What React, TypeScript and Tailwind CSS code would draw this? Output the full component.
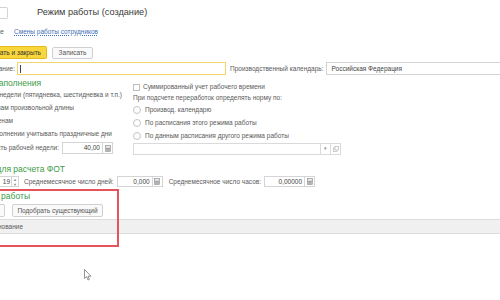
import type { ReactNode } from "react";

function Tail({ className, children }: { className: string; children: ReactNode }) {
  // text whose start is cut off by the left edge of the window
  return (
    <div className={`flex justify-end overflow-hidden whitespace-nowrap shrink-0 ${className}`}>
      <span className="shrink-0">{children}</span>
    </div>
  );
}

function CalcIcon() {
  return (
    <div className="w-[10px] h-full flex items-center justify-center border-l border-[#d6d6d6]">
      <svg width="6" height="7" viewBox="0 0 6 7">
        <rect x="0.5" y="0.5" width="5" height="6" fill="#c9c9c9" stroke="#8d8d8d" strokeWidth="0.6" />
        <rect x="1.3" y="1.2" width="3.4" height="1.3" fill="#f4f4f4" />
        <path d="M1.3 3.6h3.4M1.3 5h3.4" stroke="#7a7a7a" strokeWidth="0.6" />
      </svg>
    </div>
  );
}

function Radio({ label }: { label: string }) {
  return (
    <div className="h-[13px] flex items-center gap-[4px]">
      <span className="w-[8px] h-[8px] rounded-full border border-[#c4c4c4] bg-white" />
      <span>{label}</span>
    </div>
  );
}

export default function App() {
  return (
    <div
      className="relative w-[500px] h-[300px] overflow-hidden bg-white text-[6.5px] text-[#5a5a5a]"
      style={{ fontFamily: '"Liberation Sans", Arial, sans-serif' }}
    >
      {/* title */}
      <div className="h-[13px] mt-[6px] flex items-center">
        <div className="w-[8px] h-[12px] border border-l-0 border-[#d2d2d2] bg-white rounded-r-[2px]" />
        <div className="ml-[29px] text-[9.2px] text-[#3a3a3a] whitespace-nowrap">Режим работы (создание)</div>
      </div>

      {/* navigation */}
      <div className="h-[10px] mt-[8px] flex items-center">
        <Tail className="w-[4px]">Основное</Tail>
        <span className="ml-[10px] text-[#3f6fb3] underline decoration-dotted underline-offset-1">Смены работы сотрудников</span>
      </div>

      {/* command bar */}
      <div className="h-[13px] mt-[9px] flex items-center">
        <div className="h-[13px] w-[47px] flex items-center justify-end pr-[5px] bg-[#f9d63c] border border-l-0 border-[#e2bb18] rounded-r-[2px] text-[#333]">
          <Tail className="w-[42px]">Записать и закрыть</Tail>
        </div>
        <div className="ml-[5px] h-[12px] w-[41px] flex items-center justify-center border border-[#d0d0d0] rounded-[2px] bg-[#fafafa] text-[#555]">
          Записать
        </div>
      </div>

      {/* name / calendar */}
      <div className="h-[13px] mt-[3px] flex items-center">
        <Tail className="w-[15px]">Наименование:</Tail>
        <div className="ml-[2px] w-[209px] h-[13px] border border-[#f2d66b] bg-white flex items-center pl-[2px]">
          <span className="w-px h-[8px] bg-[#444]" />
        </div>
        <span className="ml-[4px] whitespace-nowrap">Производственный календарь:</span>
        <div className="ml-[3px] flex-1 h-[13px] border border-[#d4d4d4] border-r-0 flex items-center pl-[4px] text-[#444] whitespace-nowrap">
          Российская Федерация
        </div>
      </div>

      {/* filling mode */}
      <div className="flex mt-[3px]">
        <div className="w-[133px] shrink-0 flex flex-col">
          <Tail className="w-[41px] h-[10px] items-center text-[8.5px] text-[#3c9b46]">Способ заполнения</Tail>
          <Tail className="w-[122px] h-[13px] items-center">По дням недели (пятидневка, шестидневка и т.п.)</Tail>
          <Tail className="w-[74px] h-[13px] items-center">По циклам произвольной длины</Tail>
          <Tail className="w-[13px] h-[13px] items-center">По сменам</Tail>
          <Tail className="w-[112px] h-[13px] items-center">При заполнении учитывать праздничные дни</Tail>
          <div className="h-[12px] mt-[2px] flex items-center">
            <Tail className="w-[59px]">Длительность рабочей недели:</Tail>
            <div className="ml-[3px] w-[51px] h-[12px] border border-[#d4d4d4] flex items-center">
              <span className="flex-1 text-right pr-[2px] text-[#444]">40,00</span>
              <CalcIcon />
            </div>
          </div>
        </div>

        <div className="flex flex-col mt-[3px]">
          <div className="h-[12px] flex items-center gap-[3px]">
            <span className="w-[7px] h-[7px] border border-[#bdbdbd] bg-white" />
            <span className="whitespace-nowrap">Суммированный учет рабочего времени</span>
          </div>
          <div className="h-[10px] flex items-center whitespace-nowrap">При подсчете переработок определять норму по:</div>
          <Radio label="Производ. календарю" />
          <Radio label="По расписания этого режима работы" />
          <Radio label="По данным рaсписания другого режима работы" />
          <div className="mt-[1px] w-[208px] h-[12px] border border-[#dadada] flex justify-end">
            <div className="w-[10px] border-l border-[#dadada] flex items-center justify-center text-[5px] text-[#888]">▾</div>
            <div className="w-[10px] border-l border-[#dadada] flex items-center justify-center">
              <svg width="6" height="6" viewBox="0 0 6 6">
                <rect x="0.5" y="2" width="3.5" height="3.5" fill="none" stroke="#aaa" strokeWidth="0.6" />
                <rect x="2" y="0.5" width="3.5" height="3.5" fill="white" stroke="#aaa" strokeWidth="0.6" />
              </svg>
            </div>
          </div>
        </div>
      </div>

      {/* payroll */}
      <Tail className="w-[65px] h-[10px] mt-[9px] items-center text-[8.5px] text-[#3c9b46]">Параметры для расчета ФОТ</Tail>
      <div className="h-[11px] mt-[2px] flex items-center">
        <div className="w-[12px] h-[11px] border border-l-0 border-[#d4d4d4] flex items-center justify-end pr-[1px] text-[#444]">19</div>
        <div className="w-[7px] h-[11px] border border-l-0 border-[#d4d4d4] flex flex-col items-center justify-center text-[4px] leading-[5px] text-[#888]">
          <span>▲</span>
          <span>▼</span>
        </div>
        <span className="ml-[5px] whitespace-nowrap">Среднемесячное число дней:</span>
        <div className="ml-[3px] w-[46px] h-[11px] border border-[#d4d4d4] flex items-center">
          <span className="flex-1 text-right pr-[2px] text-[#444]">0,000</span>
          <CalcIcon />
        </div>
        <span className="ml-[6px] whitespace-nowrap">Среднемесячное число часов:</span>
        <div className="ml-[3px] w-[51px] h-[11px] border border-[#d4d4d4] flex items-center">
          <span className="flex-1 text-right pr-[2px] text-[#444]">0,00000</span>
          <CalcIcon />
        </div>
      </div>

      {/* schedules */}
      <Tail className="w-[30px] h-[10px] mt-[4px] items-center text-[8.5px] text-[#3c9b46]">Графики работы</Tail>
      <div className="h-[13px] mt-[3px] flex items-center">
        <div className="w-[5px] h-[13px] border border-l-0 border-[#d0d0d0] rounded-r-[2px] bg-[#fafafa]" />
        <div className="ml-[7px] h-[13px] w-[91px] flex items-center justify-center border border-[#d0d0d0] rounded-[2px] bg-[#fafafa] text-[#555] whitespace-nowrap">
          Подобрать существующий
        </div>
      </div>
      <div className="h-[15px] mt-[2px] flex items-center bg-[#f0f0f0] border-y border-[#dcdcdc]">
        <Tail className="w-[23px]">Наименование</Tail>
      </div>

      {/* highlight frame drawn over the form */}
      <div className="absolute left-[-3px] top-[189px] w-[122px] h-[58px] border-2 border-[#e6535a]" />

      {/* mouse pointer */}
      <svg className="absolute left-[84px] top-[269px]" width="8" height="12" viewBox="0 0 8 12">
        <path d="M0.5 0.5 L0.5 9.5 L2.6 7.6 L4 11 L5.4 10.4 L4 7.2 L7 7.2 Z" fill="white" stroke="#777" strokeWidth="0.8" strokeLinejoin="round" />
      </svg>
    </div>
  );
}
